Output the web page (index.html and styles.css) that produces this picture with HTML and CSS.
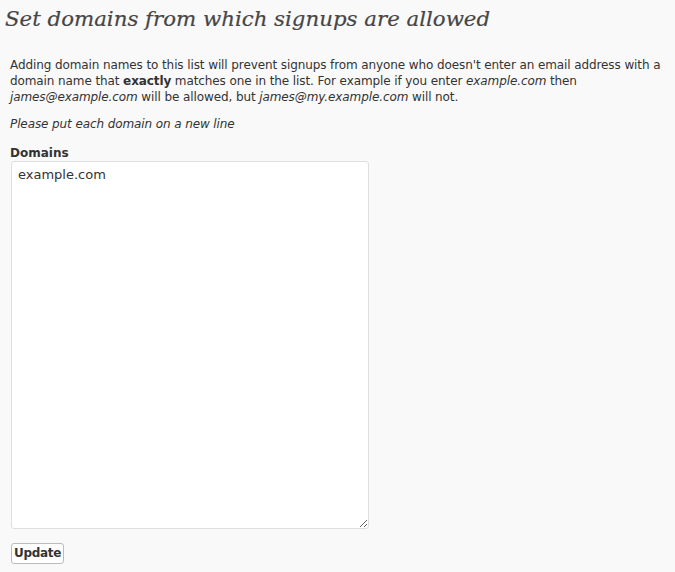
FILE: index.html
```html
<!DOCTYPE html>
<html>
<head>
<meta charset="utf-8">
<link rel="stylesheet" href="styles.css">
</head>
<body>
<div class="wrap">
  <h2 class="title">Set domains from which signups are allowed</h2>
  <p class="desc">Adding domain names to this list will prevent signups from anyone who doesn't enter an email address with a domain name that <strong>exactly</strong> matches one in the list. For example if you enter <em>example.com</em> then <em>james@example.com</em> will be allowed, but <em>james@my.example.com</em> will not.</p>
  <p class="hint"><em>Please put each domain on a new line</em></p>
  <form class="form">
    <label class="label" for="domains">Domains</label>
    <textarea id="domains" class="domains">example.com</textarea>
    <div class="actions"><button type="button" class="btn">Update</button></div>
  </form>
</div>
</body>
</html>
```
FILE: styles.css
```css
html, body {
  margin: 0;
  padding: 0;
  background: #f9f9f9;
}
body {
  font-family: "DejaVu Sans", sans-serif;
  font-size: 12px;
  color: #333;
}
.wrap {
  padding: 0 13px 0 10px;
}
.title {
  font-family: "DejaVu Serif", serif;
  font-style: italic;
  font-weight: normal;
  font-size: 21.3px;
  color: #464646;
  margin: 0 0 0 -5px;
  padding: 6px 0 0;
  line-height: 26px;
  -webkit-text-stroke: 0.2px #464646;
}
.desc {
  margin: 25px 0 0;
  line-height: 16px;
  letter-spacing: -0.1px;
}
.hint {
  margin: 11px 0 0;
  line-height: 16px;
  letter-spacing: -0.1px;
}
.form {
  display: flex;
  flex-direction: column;
  align-items: flex-start;
  margin-top: 13px;
}
.label {
  font-weight: bold;
  line-height: 16px;
}
.domains {
  box-sizing: border-box;
  width: 358px;
  height: 368px;
  margin: 0 0 0 1px;
  border: 1px solid #dfdfdf;
  border-radius: 3px;
  background: #fff;
  font-family: "DejaVu Sans", sans-serif;
  font-size: 13px;
  color: #333;
  padding: 4px 6px;
  line-height: 17px;
  resize: vertical;
}
.actions {
  margin-top: 14px;
  margin-left: 1px;
}
.btn {
  font-family: "DejaVu Sans", sans-serif;
  font-size: 12px;
  font-weight: bold;
  letter-spacing: -0.3px;
  color: #333;
  background: #fff;
  border: 1px solid #bbb;
  border-radius: 3px;
  padding: 1px 2px;
  height: 21px;
  line-height: 17px;
}
```
